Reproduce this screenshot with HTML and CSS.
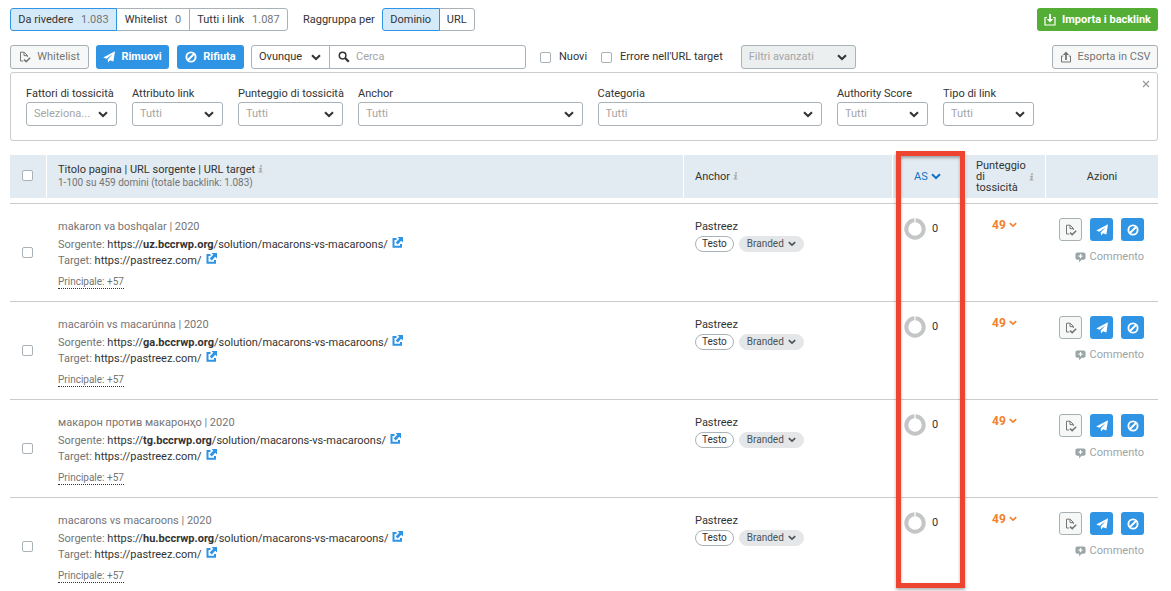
FILE: index.html
```html
<!DOCTYPE html>
<html lang="it">
<head>
<meta charset="utf-8">
<title>Backlink Audit</title>
<link rel="stylesheet" href="styles.css">
</head>
<body>
<svg class="sprite" aria-hidden="true">
  <symbol id="chevron" viewBox="0 0 10 7"><path d="M1 1.2 5 5 9 1.2" fill="none" stroke="currentColor" stroke-width="2"/></symbol>
  <symbol id="filecheck" viewBox="0 0 12 12"><path d="M4.2 10H1.5V1.2h3.7l3.1 3.1V6M5 1.4v3.2h3.2" fill="none" stroke="currentColor"/><path d="M5 8.6 7.2 10.600 11.200 6.700" fill="none" stroke="currentColor" stroke-width="1.500"/></symbol>
  <symbol id="plane" viewBox="0 0 12 12"><path d="M12 .3 10.400 10.600 7 9.200 5.100 11.600 4.700 8.500 9.800 2.900 3.500 7.800.2 6.500Z" fill="currentColor"/></symbol>
  <symbol id="ban" viewBox="0 0 12 12"><circle cx="6" cy="6" r="4.600" fill="none" stroke="currentColor" stroke-width="1.900"/><path d="M3 9 9 3" stroke="currentColor" stroke-width="1.900"/></symbol>
  <symbol id="search" viewBox="0 0 12 12"><circle cx="4.600" cy="4.600" r="3.300" fill="none" stroke="currentColor" stroke-width="1.500"/><path d="M7 7l3.800 3.800" stroke="currentColor" stroke-width="2.200"/></symbol>
  <symbol id="import" viewBox="0 0 12 12"><path d="M3 3.500H1v7.500h10V3.500H9" fill="none" stroke="currentColor" stroke-width="1.200"/><path d="M6 0v6" stroke="currentColor" stroke-width="1.800"/><path d="M2.800 5h6.400L6 8.600Z" fill="currentColor"/></symbol>
  <symbol id="export" viewBox="0 0 12 12"><path d="M3.200 5H1.500v6h9V5H8.800" fill="none" stroke="currentColor"/><path d="M6 9V3" stroke="currentColor" stroke-width="1.800"/><path d="M2.800 4h6.400L6 .5Z" fill="currentColor"/></symbol>
  <symbol id="external" viewBox="0 0 11 11"><path d="M4.500 2H1.500v7.700h7.500V7" fill="none" stroke="currentColor" stroke-width="2"/><path d="M5.500 0H11v5.500L9.200 3.700 5.800 7.600 3.700 5.500 7.300 1.800Z" fill="currentColor"/></symbol>
  <symbol id="comment" viewBox="0 0 12 12"><path d="M2.500.5h7Q11.500.5 11.500 2.500v4Q11.500 8.500 9.500 8.500H7.200L4.500 11.500v-3h-2Q.5 8.500.5 6.500v-4Q.5.5 2.500.5Z" fill="currentColor"/><path d="M6 2.300v4.400M3.800 4.500h4.400" stroke="#fff" stroke-width="1.300"/></symbol>
  <symbol id="ring" viewBox="0 0 22 22"><circle cx="11" cy="11" r="8.700" fill="none" stroke="#c4c5c6" stroke-width="4"/><path d="M11 0v5" stroke="#fff" stroke-width="1.200"/></symbol>
  <symbol id="info" viewBox="0 0 5 8"><path d="M2 .2h2v1.500H2zM.8 2.800H4L3.200 6.600h1.200v1H.5v-1h.9l.6-2.800H.8Z" fill="currentColor"/></symbol>
  <symbol id="close" viewBox="0 0 8 8"><path d="M1 1l6 6M7 1 1 7" stroke="currentColor" stroke-width="1.200"/></symbol>
</svg>

<main class="page">
  <div class="bar">
    <div class="group">
      <button class="seg seg-a on" aria-pressed="true">Da rivedere <span class="count">1.083</span></button>
      <button class="seg seg-b" aria-pressed="false">Whitelist <span class="count">0</span></button>
      <button class="seg seg-c" aria-pressed="false">Tutti i link <span class="count">1.087</span></button>
    </div>
    <div class="grouping">
      <span>Raggruppa per</span>
      <div class="group">
        <button class="seg seg-d on" aria-pressed="true">Dominio</button>
        <button class="seg seg-e" aria-pressed="false">URL</button>
      </div>
    </div>
    <button class="btn green push"><svg class="ico"><use href="#import"/></svg>Importa i backlink</button>
  </div>

  <div class="bar tools">
    <button class="btn grey w-white"><svg class="ico"><use href="#filecheck"/></svg>Whitelist</button>
    <button class="btn blue w-remove"><svg class="ico"><use href="#plane"/></svg>Rimuovi</button>
    <button class="btn blue w-reject"><svg class="ico"><use href="#ban"/></svg>Rifiuta</button>
    <div class="group">
      <div class="select scope"><select aria-label="Cerca in"><option>Ovunque</option></select><svg class="chev"><use href="#chevron"/></svg></div>
      <div class="search"><svg class="ico"><use href="#search"/></svg><input type="text" aria-label="Cerca" placeholder="Cerca"></div>
    </div>
    <label class="check first"><input type="checkbox">Nuovi</label>
    <label class="check"><input type="checkbox">Errore nell'URL target</label>
    <div class="select advanced"><select aria-label="Filtri avanzati"><option>Filtri avanzati</option></select><svg class="chev"><use href="#chevron"/></svg></div>
    <button class="btn grey push w-export"><svg class="ico"><use href="#export"/></svg>Esporta in CSV</button>
  </div>

  <section class="panel">
    <div class="filters">
      <label class="field">Fattori di tossicità<span class="select"><select><option>Seleziona...</option></select><svg class="chev"><use href="#chevron"/></svg></span></label>
      <label class="field">Attributo link<span class="select"><select><option>Tutti</option></select><svg class="chev"><use href="#chevron"/></svg></span></label>
      <label class="field">Punteggio di tossicità<span class="select"><select><option>Tutti</option></select><svg class="chev"><use href="#chevron"/></svg></span></label>
      <label class="field">Anchor<span class="select"><select><option>Tutti</option></select><svg class="chev"><use href="#chevron"/></svg></span></label>
      <label class="field">Categoria<span class="select"><select><option>Tutti</option></select><svg class="chev"><use href="#chevron"/></svg></span></label>
      <label class="field">Authority Score<span class="select"><select><option>Tutti</option></select><svg class="chev"><use href="#chevron"/></svg></span></label>
      <label class="field">Tipo di link<span class="select"><select><option>Tutti</option></select><svg class="chev"><use href="#chevron"/></svg></span></label>
    </div>
    <button class="close" aria-label="Chiudi"><svg><use href="#close"/></svg></button>
  </section>

  <div class="results">
    <table>
      <colgroup><col class="c-check"><col><col class="c-anchor"><col class="c-as"><col class="c-tox"><col class="c-act"></colgroup>
      <thead>
        <tr>
          <th class="tick"><input type="checkbox" aria-label="Seleziona tutti"></th>
          <th class="main">Titolo pagina | URL sorgente | URL target <svg class="info"><use href="#info"/></svg><div class="sub">1-100 su 459 domini (totale backlink: 1.083)</div></th>
          <th class="anchor">Anchor <svg class="info"><use href="#info"/></svg></th>
          <th class="as"><button class="sort">AS<svg><use href="#chevron"/></svg></button></th>
          <th class="tox"><div class="toxhead"><span>Punteggio di tossicità</span><svg class="info"><use href="#info"/></svg></div></th>
          <th class="act">Azioni</th>
        </tr>
      </thead>
      <tbody>
        <tr>
          <td class="tick"><input type="checkbox" aria-label="Seleziona uz.bccrwp.org"></td>
          <td class="main"><div class="title">makaron va boshqalar | 2020</div>
            <div class="line">Sorgente: <a href="#">https://<b>uz.bccrwp.org</b>/solution/macarons-vs-macaroons/</a><svg class="ext"><use href="#external"/></svg></div>
            <div class="line">Target: <a href="#">https://pastreez.com/</a><svg class="ext"><use href="#external"/></svg></div>
            <button class="more">Principale: +57</button></td>
          <td class="anchor">Pastreez<div class="pills"><span class="pill">Testo</span><button class="pill brand">Branded<svg><use href="#chevron"/></svg></button></div></td>
          <td class="as"><div class="score"><svg><use href="#ring"/></svg>0</div></td>
          <td class="tox"><button class="toxic">49<svg><use href="#chevron"/></svg></button></td>
          <td class="act"><div class="acts"><button class="btn grey sq" aria-label="Whitelist"><svg class="ico"><use href="#filecheck"/></svg></button><button class="btn blue sq" aria-label="Rimuovi"><svg class="ico"><use href="#plane"/></svg></button><button class="btn blue sq" aria-label="Rifiuta"><svg class="ico"><use href="#ban"/></svg></button></div><button class="note"><svg><use href="#comment"/></svg>Commento</button></td>
        </tr>
        <tr>
          <td class="tick"><input type="checkbox" aria-label="Seleziona ga.bccrwp.org"></td>
          <td class="main"><div class="title">macaróin vs macarúnna | 2020</div>
            <div class="line">Sorgente: <a href="#">https://<b>ga.bccrwp.org</b>/solution/macarons-vs-macaroons/</a><svg class="ext"><use href="#external"/></svg></div>
            <div class="line">Target: <a href="#">https://pastreez.com/</a><svg class="ext"><use href="#external"/></svg></div>
            <button class="more">Principale: +57</button></td>
          <td class="anchor">Pastreez<div class="pills"><span class="pill">Testo</span><button class="pill brand">Branded<svg><use href="#chevron"/></svg></button></div></td>
          <td class="as"><div class="score"><svg><use href="#ring"/></svg>0</div></td>
          <td class="tox"><button class="toxic">49<svg><use href="#chevron"/></svg></button></td>
          <td class="act"><div class="acts"><button class="btn grey sq" aria-label="Whitelist"><svg class="ico"><use href="#filecheck"/></svg></button><button class="btn blue sq" aria-label="Rimuovi"><svg class="ico"><use href="#plane"/></svg></button><button class="btn blue sq" aria-label="Rifiuta"><svg class="ico"><use href="#ban"/></svg></button></div><button class="note"><svg><use href="#comment"/></svg>Commento</button></td>
        </tr>
        <tr>
          <td class="tick"><input type="checkbox" aria-label="Seleziona tg.bccrwp.org"></td>
          <td class="main"><div class="title">макарон против макаронҳо | 2020</div>
            <div class="line">Sorgente: <a href="#">https://<b>tg.bccrwp.org</b>/solution/macarons-vs-macaroons/</a><svg class="ext"><use href="#external"/></svg></div>
            <div class="line">Target: <a href="#">https://pastreez.com/</a><svg class="ext"><use href="#external"/></svg></div>
            <button class="more">Principale: +57</button></td>
          <td class="anchor">Pastreez<div class="pills"><span class="pill">Testo</span><button class="pill brand">Branded<svg><use href="#chevron"/></svg></button></div></td>
          <td class="as"><div class="score"><svg><use href="#ring"/></svg>0</div></td>
          <td class="tox"><button class="toxic">49<svg><use href="#chevron"/></svg></button></td>
          <td class="act"><div class="acts"><button class="btn grey sq" aria-label="Whitelist"><svg class="ico"><use href="#filecheck"/></svg></button><button class="btn blue sq" aria-label="Rimuovi"><svg class="ico"><use href="#plane"/></svg></button><button class="btn blue sq" aria-label="Rifiuta"><svg class="ico"><use href="#ban"/></svg></button></div><button class="note"><svg><use href="#comment"/></svg>Commento</button></td>
        </tr>
        <tr>
          <td class="tick"><input type="checkbox" aria-label="Seleziona hu.bccrwp.org"></td>
          <td class="main"><div class="title">macarons vs macaroons | 2020</div>
            <div class="line">Sorgente: <a href="#">https://<b>hu.bccrwp.org</b>/solution/macarons-vs-macaroons/</a><svg class="ext"><use href="#external"/></svg></div>
            <div class="line">Target: <a href="#">https://pastreez.com/</a><svg class="ext"><use href="#external"/></svg></div>
            <button class="more">Principale: +57</button></td>
          <td class="anchor">Pastreez<div class="pills"><span class="pill">Testo</span><button class="pill brand">Branded<svg><use href="#chevron"/></svg></button></div></td>
          <td class="as"><div class="score"><svg><use href="#ring"/></svg>0</div></td>
          <td class="tox"><button class="toxic">49<svg><use href="#chevron"/></svg></button></td>
          <td class="act"><div class="acts"><button class="btn grey sq" aria-label="Whitelist"><svg class="ico"><use href="#filecheck"/></svg></button><button class="btn blue sq" aria-label="Rimuovi"><svg class="ico"><use href="#plane"/></svg></button><button class="btn blue sq" aria-label="Rifiuta"><svg class="ico"><use href="#ban"/></svg></button></div><button class="note"><svg><use href="#comment"/></svg>Commento</button></td>
        </tr>
      </tbody>
    </table>
    <div class="highlight"></div>
  </div>
</main>
</body>
</html>
```
FILE: styles.css
```css
* { box-sizing: border-box; }
body { margin: 0; background: #fff; color: #333; font: 11px/16px Roboto, "Noto Sans", sans-serif; }
button, input, select { font: inherit; color: inherit; margin: 0; }
button { cursor: pointer; white-space: nowrap; }
svg { flex: none; }
.sprite { position: absolute; width: 0; height: 0; }
.page { padding: 8px 13px 0 10px; }

.bar { display: flex; align-items: center; white-space: nowrap; }
.push { margin-left: auto; }
.group { display: flex; }
.seg { height: 23px; padding: 0; border: 1px solid #a9b2b6; background: #fff; margin-left: -1px; }
.seg:first-child { margin-left: 0; border-radius: 3px 0 0 3px; }
.seg:last-child { border-radius: 0 3px 3px 0; }
.seg.on { background: #d5eaf9; border-color: #3095e5; z-index: 1; }
.seg-a { width: 107px; }
.seg-b { width: 74px; }
.seg-c { width: 99px; }
.seg-d { width: 58px; }
.seg-e { width: 36px; }
.count { color: #757575; margin-left: 5px; }
.grouping { display: flex; align-items: center; gap: 7px; margin-left: 15px; }

.btn { display: flex; align-items: center; justify-content: center; gap: 6px; height: 24px; padding: 0 7px; border: 1px solid transparent; border-radius: 3px; }
.ico { width: 12px; height: 12px; }
.green { background: #54ae35; color: #fff; font-weight: 700; height: 23px; width: 121px; }
.blue { background: #2f94e4; color: #fff; font-weight: 700; }
.grey { background: #f6f8f8; border-color: #a7b0b4; color: #757575; }
.tools { margin-top: 14px; }
.w-white { width: 79px; }
.w-remove { width: 73px; margin-left: 7px; }
.w-reject { width: 67px; margin: 0 7px 0 8px; }
.w-export { width: 106px; }

.select { display: grid; align-items: center; }
.select > * { grid-area: 1 / 1; }
select { appearance: none; width: 100%; height: 24px; border: 1px solid #a9b2b6; border-radius: 3px; background: #fff; padding: 0 20px 0 7px; }
.chev { width: 10px; height: 7px; justify-self: end; margin-right: 9px; pointer-events: none; color: #333; }
.scope { width: 79px; }
.scope select { border-radius: 3px 0 0 3px; }
.search { display: flex; align-items: center; gap: 6px; width: 197px; height: 24px; margin-left: -1px; padding-left: 8px; border: 1px solid #a9b2b6; border-radius: 0 3px 3px 0; }
.search input { flex: 1; min-width: 0; border: 0; padding: 0; background: none; outline: 0; }
.search input::placeholder { color: #a5a5a5; }
input[type="checkbox"] { appearance: none; width: 11px; height: 11px; border: 1px solid #a9b2b6; border-radius: 2px; background: #fff; }
.check { display: flex; align-items: center; gap: 8px; margin-left: 14px; }
.first { margin-left: 14px; }
.advanced { width: 115px; margin-left: 18px; }
.advanced select { background: #eceff0; color: #a5a5a5; }

.panel { display: flex; justify-content: space-between; margin-top: 3px; padding: 13px 7px 14px 15px; border: 1px solid #c9cbcc; border-radius: 3px; }
.filters { flex: 1; display: grid; grid-template-columns: 91px 91px 105px 1fr 1fr 91px 91px; gap: 15px; margin-right: 108px; }
.field { min-width: 0; white-space: nowrap; }
.field select { color: #a5a5a5; }
.close { display: flex; align-self: flex-start; margin-top: -6px; padding: 0; border: 0; background: none; color: #999; }
.close svg { width: 8px; height: 8px; }

.results { position: relative; margin-top: 14px; }
table { width: 100%; table-layout: fixed; border-spacing: 0; }
.c-check { width: 37px; }
.c-anchor { width: 209px; }
.c-as { width: 73px; }
.c-tox { width: 80px; }
.c-act { width: 112px; }
th { height: 48px; padding: 0; text-align: left; font-weight: 400; background: #e2ebf1; background-clip: padding-box; border-right: 1px solid #fff; border-bottom: 5px solid #fff; }
th:last-child { border-right: 0; }
td { padding: 14px 0 12px; vertical-align: top; border-top: 1px solid #c9cbcc; }
tr:last-child td { padding-bottom: 8px; }
.tick input { display: block; margin-left: 12px; }
th.tick { padding-bottom: 2px; }
td.tick { padding-top: 43px; }
th.main, td.main { padding-left: 11px; }
th.main { padding-bottom: 3px; }
td.main, td.anchor { padding-top: 15px; }
.sub { font-size: 10px; line-height: 10px; color: #757575; }
.info { width: 5px; height: 8px; color: #aaa; }
th.anchor, td.anchor { padding-left: 11px; }
.sort { display: flex; align-items: center; gap: 3px; padding: 0 0 0 21px; border: 0; background: none; color: #1272c4; }
.sort svg { width: 10px; height: 7px; }
th.tox { padding-left: 10px; }
.toxhead { display: flex; align-items: center; justify-content: space-between; padding-right: 11px; line-height: 11px; }
.toxhead span { width: 50px; }
th.act { text-align: center; }

.title, .line { color: #757575; }
.title { margin-bottom: 2px; }
.line { display: flex; align-items: flex-start; white-space: pre; }
.line a { color: #333; text-decoration: none; }
.ext { width: 11px; height: 11px; margin-left: 4px; color: #2f94e4; }
.more { display: block; height: 14px; margin-top: 6px; padding: 0; border: 0; border-bottom: 1px dotted #333; background: none; color: #757575; font-size: 10px; line-height: 14px; }
.pills { display: flex; gap: 5px; margin-top: 1px; }
.pill { display: flex; align-items: center; gap: 4px; height: 16px; padding: 0 6px; border: 1px solid #a9b2b6; border-radius: 8px; font-size: 10px; }
.brand { background: #e4e6e8; border-color: #e4e6e8; padding: 0 7px; color: #495358; }
.brand svg { width: 8px; height: 6px; }
.score { display: flex; align-items: center; gap: 6px; padding-left: 11px; }
.score svg { width: 22px; height: 22px; }
.toxic { display: flex; align-items: center; gap: 3px; padding: 0 0 0 26px; border: 0; background: none; color: #f0812f; font-size: 12px; line-height: 14px; font-weight: 700; }
.toxic svg { width: 8px; height: 6px; }
td.act { padding-right: 14px; }
.acts { display: flex; justify-content: flex-end; gap: 8px; }
.sq { width: 23px; height: 23px; padding: 0; }
.note { display: flex; align-items: center; gap: 4px; margin: 8px 0 0 auto; padding: 0; border: 0; background: none; color: #9aa5a8; }
.note svg { width: 11px; height: 11px; }

.highlight { position: absolute; top: -4px; bottom: 3px; right: 193px; width: 69px; border: 5px solid #ed452f; box-shadow: 0 2px 3px rgba(0, 0, 0, .3), inset 0 2px 3px rgba(0, 0, 0, .3); pointer-events: none; }
```
